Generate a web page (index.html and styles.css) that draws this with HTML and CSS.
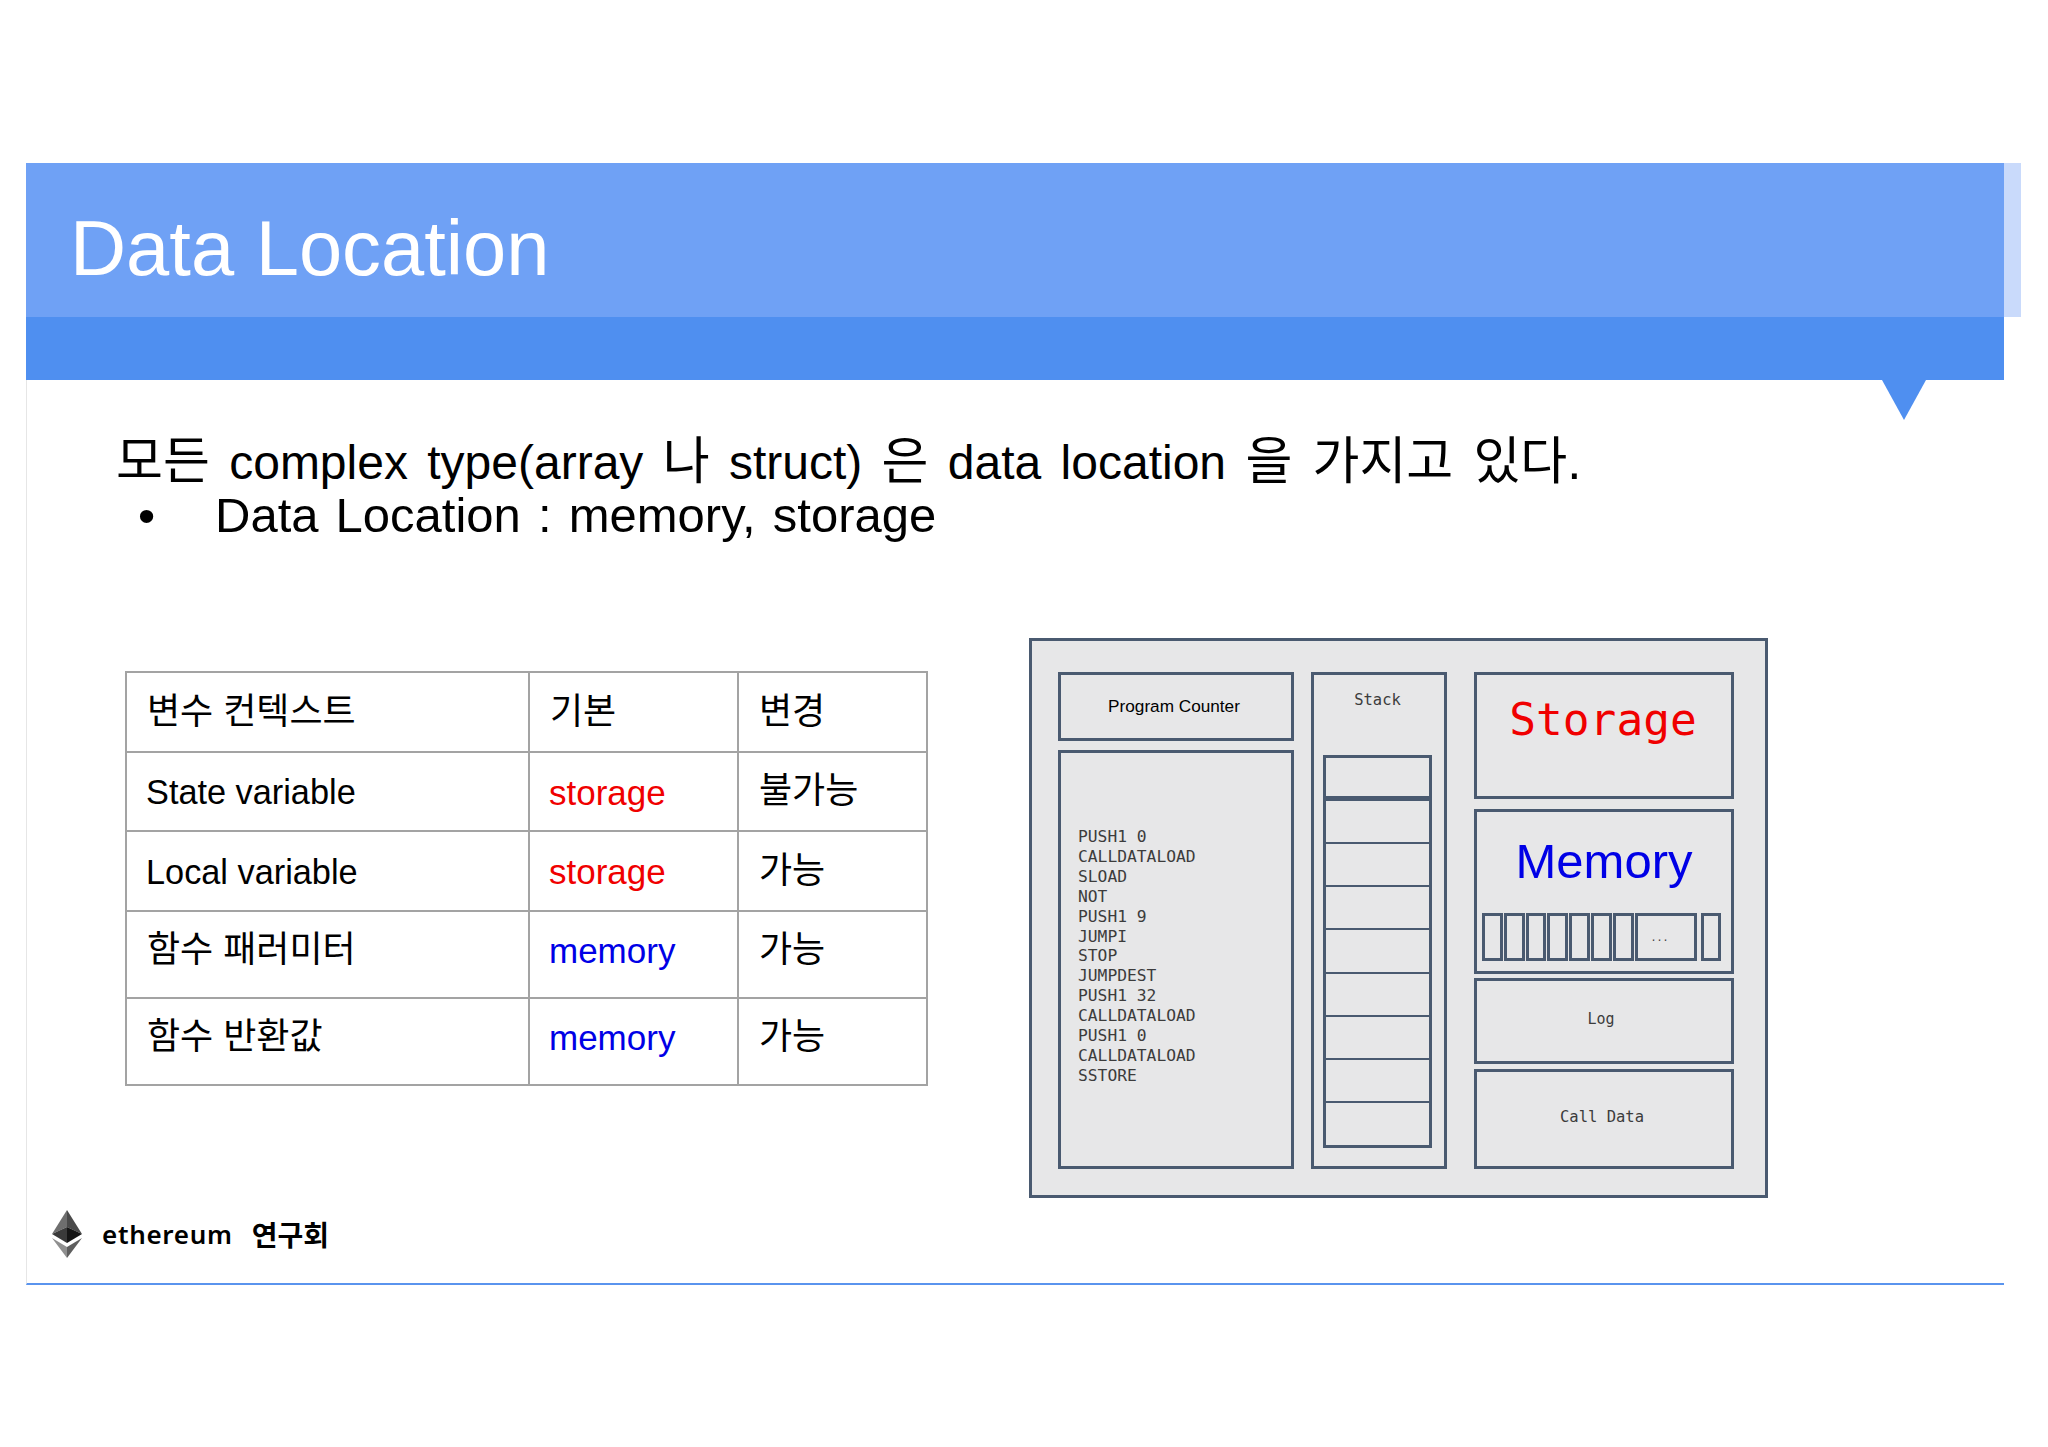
FILE: index.html
```html
<!DOCTYPE html>
<html lang="ko">
<head>
    <meta charset="UTF-8">
    <meta name="viewport" content="width=device-width, initial-scale=1.0">
    <title>Data Location</title>
    <link rel="stylesheet" href="styles.css">
</head>
<body>
    <div class="slide">
        <div class="header">
            <div class="title-bar">
                <h1>Data Location</h1>
            </div>
            <div class="band"></div>
            <div class="strip"></div>
            <div class="pointer"></div>
        </div>

        <div class="content">
            <div class="intro">
                <p><span class="hangul">모든</span> complex type(array <span class="hangul">나</span> struct) <span class="hangul">은</span> data location <span class="hangul">을 가지고 있다.</span></p>
                <ul>
                    <li>Data Location : memory, storage</li>
                </ul>
            </div>

            <div class="columns">
                <table class="rules">
                    <tr class="row-short">
                        <td class="col-name ko">변수 컨텍스트</td>
                        <td class="col-default ko">기본</td>
                        <td class="col-change ko">변경</td>
                    </tr>
                    <tr class="row-short">
                        <td class="en">State variable</td>
                        <td class="red">storage</td>
                        <td class="ko">불가능</td>
                    </tr>
                    <tr class="row-short">
                        <td class="en">Local variable</td>
                        <td class="red">storage</td>
                        <td class="ko">가능</td>
                    </tr>
                    <tr class="row-tall">
                        <td class="ko">함수 패러미터</td>
                        <td class="blue">memory</td>
                        <td class="ko">가능</td>
                    </tr>
                    <tr class="row-tall">
                        <td class="ko">함수 반환값</td>
                        <td class="blue">memory</td>
                        <td class="ko">가능</td>
                    </tr>
                </table>

                <div class="evm">
                    <div class="evm-left">
                        <div class="box pc">Program Counter</div>
                        <div class="box code">
                            <pre>PUSH1 0
CALLDATALOAD
SLOAD
NOT
PUSH1 9
JUMPI
STOP
JUMPDEST
PUSH1 32
CALLDATALOAD
PUSH1 0
CALLDATALOAD
SSTORE</pre>
                        </div>
                    </div>

                    <div class="box stack">
                        <div class="stack-label">Stack</div>
                        <div class="stack-top"></div>
                        <div class="stack-rows">
                            <div></div><div></div><div></div><div></div>
                            <div></div><div></div><div></div><div></div>
                        </div>
                    </div>

                    <div class="evm-right">
                        <div class="box storage">Storage</div>
                        <div class="box memory">
                            <div class="memory-label">Memory</div>
                            <div class="cells">
                                <div class="cell"></div>
                                <div class="cell"></div>
                                <div class="cell"></div>
                                <div class="cell"></div>
                                <div class="cell"></div>
                                <div class="cell"></div>
                                <div class="cell"></div>
                                <div class="cell cell-wide">...</div>
                                <div class="cell"></div>
                            </div>
                        </div>
                        <div class="box log">Log</div>
                        <div class="box calldata">Call Data</div>
                    </div>
                </div>
            </div>

            <div class="footer">
                <svg class="eth-logo" width="30" height="48" viewBox="0 0 30 48">
                    <polygon points="15,0 0,24 15,17" fill="#6e6e6e"/>
                    <polygon points="15,0 30,24 15,17" fill="#4a4a4a"/>
                    <polygon points="0,24 15,17 15,33" fill="#3a3a3a"/>
                    <polygon points="30,24 15,17 15,33" fill="#151515"/>
                    <polygon points="0,28 15,37 15,48" fill="#8f8f8f"/>
                    <polygon points="30,28 15,37 15,48" fill="#5e5e5e"/>
                </svg>
                <span class="brand">ethereum</span>
                <span class="brand-ko">연구회</span>
            </div>
        </div>
    </div>
</body>
</html>
```

FILE: styles.css
```css
* {
    margin: 0;
    padding: 0;
    box-sizing: border-box;
}
body {
    width: 2048px;
    height: 1447px;
    background-color: #fff;
    color: #000;
    font-family: "Liberation Sans", "Noto Sans CJK KR", sans-serif;
    overflow: hidden;
}
.slide {
    width: 1978px;
    margin: 163px 0 0 26px;
}
.header {
    position: relative;
}
.title-bar {
    height: 154px;
    background-color: #6fa1f5;
    padding: 41px 0 0 44px;
}
.title-bar h1 {
    font-size: 77.7px;
    font-weight: normal;
    line-height: 88px;
    color: #fff;
}
.band {
    height: 63px;
    background-color: #4f8ff0;
}
.strip {
    position: absolute;
    top: 0;
    left: 100%;
    width: 17px;
    height: 154px;
    background-color: #c9dafb;
}
.pointer {
    position: absolute;
    top: 100%;
    left: 1856px;
    width: 44px;
    height: 40px;
    background-color: #4f8ff0;
    clip-path: polygon(0 0, 100% 0, 50% 100%);
}

.content {
    height: 905px;
    border-left: 1px solid #e6e6e6;
    border-bottom: 2px solid #5a94ee;
}
.intro {
    padding: 55px 0 0 89px;
    font-size: 49px;
    line-height: 54px;
    word-spacing: 3.5px;
    height: 257px;
}
.intro p {
    height: 53px;
    font-size: 48px;
    word-spacing: 6px;
}
.hangul {
    font-size: 51px;
}
.intro ul {
    list-style: none;
}
.intro li {
    position: relative;
    padding-left: 99px;
}
.intro li::before {
    content: "•";
    position: absolute;
    left: 22px;
}

.columns {
    display: flex;
    align-items: flex-start;
    padding-left: 98px;
}
.rules {
    width: 803px;
    margin-top: 34px;
    border-collapse: collapse;
    table-layout: fixed;
    font-size: 35px;
    flex: none;
}
.rules td {
    border: 2px solid #a3a3a3;
    padding: 3px 0 0 19px;
}
.row-short {
    height: 79.5px;
}
.row-tall {
    height: 87px;
}
.rules .row-tall td {
    padding: 0 0 6px 19px;
}
.col-name {
    width: 403px;
}
.col-default {
    width: 209px;
}
.rules td.en {
    font-size: 34.3px;
}
.rules td.ko {
    padding: 0 0 8px 20px;
    font-size: 36px;
}
.rules .row-tall td.ko {
    padding-bottom: 16px;
}
.red {
    color: #f00000;
}
.blue {
    color: #0000e6;
}

.evm {
    display: flex;
    width: 739px;
    height: 560px;
    margin: 1px 0 0 101px;
    padding: 31px 0 0 26px;
    background-color: #e7e7e8;
    border: 3px solid #4a5a70;
    flex: none;
}
.box {
    border: 3px solid #4a5a70;
}
.evm-left {
    display: flex;
    flex-direction: column;
    gap: 9px;
    width: 236px;
    height: 497px;
}
.pc {
    height: 69px;
    display: flex;
    align-items: center;
    justify-content: center;
    font-size: 17.2px;
    padding-right: 4px;
}
.code {
    flex: 1;
    padding: 74px 0 0 17px;
}
.code pre {
    font-family: "DejaVu Sans Mono", monospace;
    font-size: 16.3px;
    line-height: 19.9px;
    color: #3c3c3c;
}
.stack {
    width: 136px;
    height: 497px;
    margin-left: 17px;
    padding: 0 12px 0 9px;
}
.stack-label {
    height: 79.5px;
    padding-top: 16px;
    text-align: center;
    font-family: "DejaVu Sans Mono", monospace;
    font-size: 15.5px;
    color: #3c3c3c;
}
.stack-top {
    height: 44px;
    border: 3px solid #4a5a70;
}
.stack-rows {
    display: flex;
    flex-direction: column;
    height: 350px;
    margin-top: -1px;
    border: 3px solid #4a5a70;
}
.stack-rows div {
    flex: 1;
    border-top: 2px solid #4a5a70;
}
.stack-rows div:first-child {
    border-top: none;
}
.evm-right {
    display: flex;
    flex-direction: column;
    width: 260px;
    height: 497px;
    margin-left: 27px;
}
.storage {
    height: 127px;
    padding: 19px 2px 0 0;
    text-align: center;
    font-family: "DejaVu Sans Mono", monospace;
    font-size: 44.5px;
    color: #f00000;
}
.memory {
    height: 165px;
    margin-top: 10px;
    padding: 0 5px;
}
.memory-label {
    height: 100.5px;
    padding-top: 21px;
    text-align: center;
    font-size: 49px;
    line-height: 56px;
    color: #0000e6;
}
.cells {
    display: flex;
    height: 48px;
    gap: 1px;
}
.cell {
    width: 20.8px;
    border: 3px solid #4a5a70;
}
.cell-wide {
    width: 62px;
    margin-right: 3px;
    padding-right: 12px;
    text-align: center;
    font-family: "DejaVu Sans Mono", monospace;
    font-size: 10px;
    line-height: 44px;
    color: #3c3c3c;
}
.log {
    height: 86px;
    margin-top: 4px;
    padding: 29px 6px 0 0;
    text-align: center;
    font-family: "DejaVu Sans Mono", monospace;
    font-size: 15px;
    color: #3c3c3c;
}
.calldata {
    height: 100px;
    margin-top: 5px;
    padding: 36px 4px 0 0;
    text-align: center;
    font-family: "DejaVu Sans Mono", monospace;
    font-size: 15.5px;
    color: #3c3c3c;
}

.footer {
    display: flex;
    align-items: center;
    height: 48px;
    margin-top: 12px;
    padding-left: 25px;
    font-family: "Noto Sans", "Noto Sans CJK KR", sans-serif;
    font-size: 26px;
    font-weight: 600;
}
.eth-logo {
    flex: none;
}
.brand {
    margin-left: 20px;
    letter-spacing: 0.7px;
}
.brand-ko {
    margin-left: 19px;
    font-family: "Noto Sans CJK KR", sans-serif;
    font-size: 28px;
}
```
